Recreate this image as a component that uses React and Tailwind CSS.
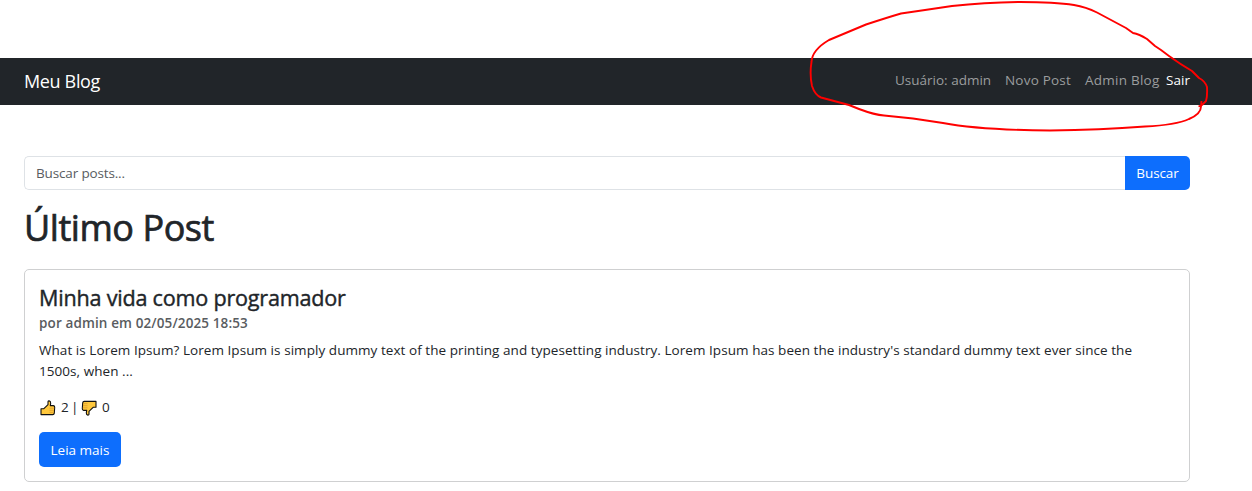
function ThumbIcon({ className }) {
  return (
    <svg viewBox="0 0 16 16" className={className} aria-hidden="true">
      <path
        d="M1 8.8H3.600L8 4.600V1.600Q8.200 .8 9.200 .9Q10.800 1.200 10.700 3.200L10.300 5.600H13.400Q14.900 5.900 14.700 7.400L14.300 13.200Q14.100 14.600 12.800 14.600H1Z"
        fill="#ffc83d"
        stroke="#111"
        strokeWidth="1.1"
        strokeLinejoin="round"
      />
      <path d="M9.500 8.200H14.200M9.500 10.300H14M9.500 12.400H13.800" stroke="#d9982a" strokeWidth=".7" />
    </svg>
  );
}

function Navbar() {
  return (
    <nav className="mt-[58px] flex h-[47px] items-center justify-between bg-[#212529] pl-6 pr-[61px] whitespace-nowrap">
      <a className="-mt-px text-[18px] leading-[27px] tracking-[-0.35px] text-white">Meu Blog</a>
      <div className="-mt-[2px] flex text-[13.5px] leading-[21px] text-[#9b9d9e]">
        <span className="w-[110px]">Usuário: admin</span>
        <a className="w-20 tracking-[0.2px]">Novo Post</a>
        <a className="w-[81px] tracking-[0.25px]">Admin Blog</a>
        <a className="w-[25px] tracking-[0.1px] text-white">Sair</a>
      </div>
    </nav>
  );
}

function SearchBar() {
  return (
    <form className="flex h-[34px] text-[13.5px] leading-[21px]">
      <input
        className="min-w-0 flex-1 rounded-l-[5px] border border-r-0 border-[#dee2e6] px-[11px] tracking-[-0.15px] outline-none placeholder:text-[#595c5f]"
        placeholder="Buscar posts..."
      />
      <button type="button" className="w-[65px] rounded-r-[5px] bg-[#0d6efd] tracking-[-0.1px] text-white">
        Buscar
      </button>
    </form>
  );
}

function PostCard() {
  return (
    <article className="mt-[19px] h-[213px] rounded-[5px] border border-[#cfd0d1] px-[14px] pt-[15px] text-[13.5px] leading-[21px]">
      <h2 className="text-[21.6px] leading-[26px] tracking-[-0.22px] [-webkit-text-stroke:0.4px]">
        Minha vida como programador
      </h2>
      <h3 className="mt-[4px] text-[13.5px] font-semibold leading-[17px] tracking-[0.12px] text-[#595c5f]">
        por admin em 02/05/2025 18:53
      </h3>
      <p className="mt-[8px] tracking-[0.056px] whitespace-nowrap">
        What is Lorem Ipsum? Lorem Ipsum is simply dummy text of the printing and typesetting industry. Lorem Ipsum has
        been the industry's standard dummy text ever since the
        <br />
        1500s, when ...
      </p>
      <div className="mt-[15px] flex items-center">
        <ThumbIcon className="mr-[5px] ml-px size-4" />
        <span className="w-[20px] tracking-[-0.6px]">2 |</span>
        <ThumbIcon className="mr-[5px] size-4 rotate-180" />
        <span>0</span>
      </div>
      <button type="button" className="mt-[14px] h-[35px] w-[82px] rounded-[5px] bg-[#0d6efd] pt-px text-white">
        Leia mais
      </button>
    </article>
  );
}

export default function App() {
  return (
    <div className="relative flow-root h-[491px] overflow-hidden bg-white font-['Open_Sans','Noto_Sans',sans-serif] text-[#212529]">
      <Navbar />
      <main className="ml-6 mt-[51px] w-[1166px]">
        <SearchBar />
        <h1 className="mt-[16px] mb-[20px] text-[36px] leading-[43px] tracking-[-0.45px] [-webkit-text-stroke:0.7px]">
          Último Post
        </h1>
        <PostCard />
      </main>
      <svg className="pointer-events-none absolute left-0 top-0 h-[491px] w-[1252px]" viewBox="0 0 1252 491" fill="none">
        <path
          d="M1198.500 106.500L1202 105L1206 101Q1207.500 96 1207 87Q1205 81 1199 78L1192 71Q1180 64 1169 56L1161 50L1155 46L1147 39Q1139 34 1133 33L1126 28L1097 12.500Q1086 7 1074 5Q1055 2 1020 2Q985 2.500 952 6L925 10L901 13.500Q889 17 866 24.500L829 40Q812 50 811.500 62Q809.500 74 812 86Q815 95 821 97.500L849 105L859 109Q875 115 884 115.500L913 118.500L943 123Q980 130 1050 130.500Q1100 130 1145 126.500Q1176 125 1189 119Q1201 114 1201 106.500L1201.500 101"
          stroke="#ff0000"
          strokeWidth="1.9"
          strokeLinejoin="round"
        />
      </svg>
    </div>
  );
}
